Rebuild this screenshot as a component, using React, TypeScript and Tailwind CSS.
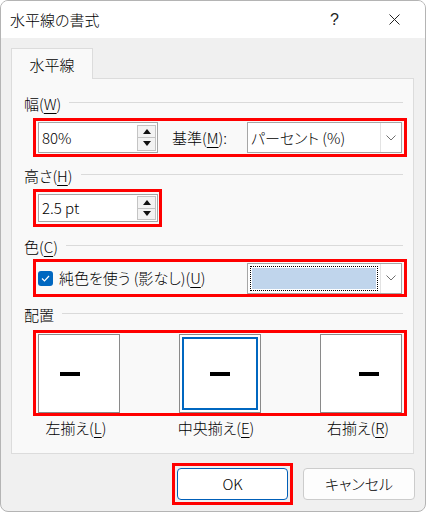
import React from 'react';

const FONT = "font-['Noto_Sans_CJK_JP','Noto_Sans',sans-serif] [font-feature-settings:'palt'] font-light";

function SectionHeading({ label, mnemonic }: { label: string; mnemonic?: string }) {
  return (
    <div className="flex items-center h-[20px] pl-[12px] pr-[10px]">
      <span className="whitespace-nowrap">
        {label}
        {mnemonic && (
          <>
            (<u className="underline-offset-[3px]">{mnemonic}</u>)
          </>
        )}
      </span>
      <div className="flex-1 h-px bg-[#dadada] ml-[8px] -mt-[3px]" />
    </div>
  );
}

function Spinner({ h }: { h: string }) {
  return (
    <div className={`flex flex-col w-[19px] ml-auto mr-[1px] ${h}`}>
      <div className="flex-1 flex items-center justify-center bg-[#f3f3f3] border border-[#c4c4c4]">
        <svg width="8" height="5" viewBox="0 0 8 5">
          <path d="M0 5L4 0L8 5Z" fill="#111" />
        </svg>
      </div>
      <div className="flex-1 flex items-center justify-center bg-[#f3f3f3] border border-t-0 border-[#c4c4c4]">
        <svg width="8" height="5" viewBox="0 0 8 5">
          <path d="M0 0L4 5L8 0Z" fill="#111" />
        </svg>
      </div>
    </div>
  );
}

function Chevron() {
  return (
    <div className="w-[21px] h-full flex items-center justify-center bg-white border-l border-[#e3e3e3]">
      <svg width="10" height="6" viewBox="0 0 10 6">
        <path d="M0.5 0.5L5 5L9.5 0.5" fill="none" stroke="#707070" strokeWidth="1" />
      </svg>
    </div>
  );
}

function AlignBox({ offset, selected }: { offset: string; selected?: boolean }) {
  return (
    <div className="w-[82px] h-[79px] border border-[#8a8a8a] bg-white p-[2px]">
      <div
        className={
          selected
            ? 'w-full h-full border-2 border-[#0067c0] flex items-center justify-center'
            : 'w-full h-full flex items-center ' + offset
        }
      >
        <div className="w-[20px] h-[4px] bg-black" />
      </div>
    </div>
  );
}

export default function App() {
  return (
    <div className={`w-[426px] h-[512px] bg-white text-[15px] leading-[20px] text-black ${FONT}`}>
      <div className="w-full h-full rounded-[8px] border border-[#b4b4b4] bg-[#f0f0f0] overflow-hidden flex flex-col">
        {/* title bar */}
        <div className="h-[37px] bg-white flex items-center pl-[9px] shrink-0">
          <span>水平線の書式</span>
          <span className="ml-auto font-['Liberation_Sans',sans-serif] text-[16px] text-[#222]">?</span>
          <svg className="ml-[50px] mr-[25px]" width="11" height="11" viewBox="0 0 11 11">
            <path d="M0.5 0.5L10.5 10.5M10.5 0.5L0.5 10.5" stroke="#222" strokeWidth="1" />
          </svg>
        </div>

        {/* body */}
        <div className="px-[10px] pt-[10px]">
          <div className="relative z-10 -mb-px w-[82px] h-[31px] border border-b-0 border-[#dcdcdc] bg-[#f9f9f9] flex justify-center pt-[6px]">
            水平線
          </div>
          <div className="w-[403px] h-[376px] border border-[#dcdcdc] bg-[#f9f9f9]">
            {/* 幅 */}
            <div className="mt-[15px]">
              <SectionHeading label="幅" mnemonic="W" />
            </div>
            <div className="mt-[4px] ml-[21px] w-[374px] h-[39px] border-[3px] border-[#ff0000] pl-[2px] pt-px flex items-start">
              <div className="w-[120px] h-[31px] border border-[#a6a6a6] bg-white flex items-center pl-[3px]">
                <span>80%</span>
                <Spinner h="h-[26px]" />
              </div>
              <div className="ml-[14px] h-[31px] flex items-center whitespace-nowrap">
                基準(<u className="underline-offset-[3px]">M</u>):
              </div>
              <div className="ml-auto mr-[2px] w-[155px] h-[31px] border border-[#a6a6a6] bg-white flex items-center">
                <span className="pl-[3px] flex-1">パーセント (%)</span>
                <Chevron />
              </div>
            </div>

            {/* 高さ */}
            <div className="mt-[9px]">
              <SectionHeading label="高さ" mnemonic="H" />
            </div>
            <div className="mt-[3px] ml-[21px] w-[129px] h-[38px] border-[3px] border-[#ff0000] pl-[2px] pt-[2px]">
              <div className="w-[120px] h-[28px] border border-[#a6a6a6] bg-white flex items-center pl-[3px]">
                <span>2.5 pt</span>
                <Spinner h="h-[24px]" />
              </div>
            </div>

            {/* 色 */}
            <div className="mt-[10px]">
              <SectionHeading label="色" mnemonic="C" />
            </div>
            <div className="mt-[2px] ml-[21px] w-[374px] h-[38px] border-[3px] border-[#ff0000] pl-[2px] flex items-center">
              <div className="w-[15px] h-[15px] rounded-[3px] bg-[#0067c0] flex items-center justify-center">
                <svg width="9" height="7" viewBox="0 0 9 7">
                  <path d="M1 3.5L3.5 6L8 1" fill="none" stroke="#fff" strokeWidth="1.2" />
                </svg>
              </div>
              <span className="ml-[6px] whitespace-nowrap">
                純色を使う (影なし)(<u className="underline-offset-[3px]">U</u>)
              </span>
              <div className="ml-auto mr-[2px] w-[155px] h-[31px] border border-[#a6a6a6] bg-white flex items-center">
                <div className="flex-1 h-full p-[2px]">
                  <div className="w-full h-full border border-dotted border-black p-px">
                    <div className="w-full h-full bg-[#c0d5ec]" />
                  </div>
                </div>
                <Chevron />
              </div>
            </div>

            {/* 配置 */}
            <div className="mt-[8px]">
              <SectionHeading label="配置" />
            </div>
            <div className="mt-[5px] ml-[21px] w-[374px] h-[86px] border-[3px] border-[#ff0000] px-[2px] pt-px flex justify-between">
              <AlignBox offset="justify-start pl-[19px]" />
              <AlignBox offset="" selected />
              <AlignBox offset="justify-end pr-[20px]" />
            </div>
            <div className="mt-[2px] ml-[21px] w-[374px] flex h-[20px]">
              <span className="w-[90px] text-center -ml-[2px]">
                左揃え(<u className="underline-offset-[3px]">L</u>)
              </span>
              <span className="w-[90px] text-center ml-[50px]">
                中央揃え(<u className="underline-offset-[3px]">E</u>)
              </span>
              <span className="w-[90px] text-center ml-[52px]">
                右揃え(<u className="underline-offset-[3px]">R</u>)
              </span>
            </div>
          </div>

          {/* buttons */}
          <div className="mt-[9px] flex items-start">
            <div className="ml-[161px] w-[121px] h-[42px] border-[3px] border-[#ff0000] pl-[2px] pt-[2px]">
              <div className="w-[111px] h-[32px] rounded-[4px] border border-[#005fb8] bg-white flex items-center justify-center">
                OK
              </div>
            </div>
            <div className="ml-[10px] w-[112px] h-[32px] mt-[5px] rounded-[4px] border border-[#cccccc] bg-[#fdfdfd] flex items-center justify-center">
              キャンセル
            </div>
          </div>
        </div>
      </div>
    </div>
  );
}
